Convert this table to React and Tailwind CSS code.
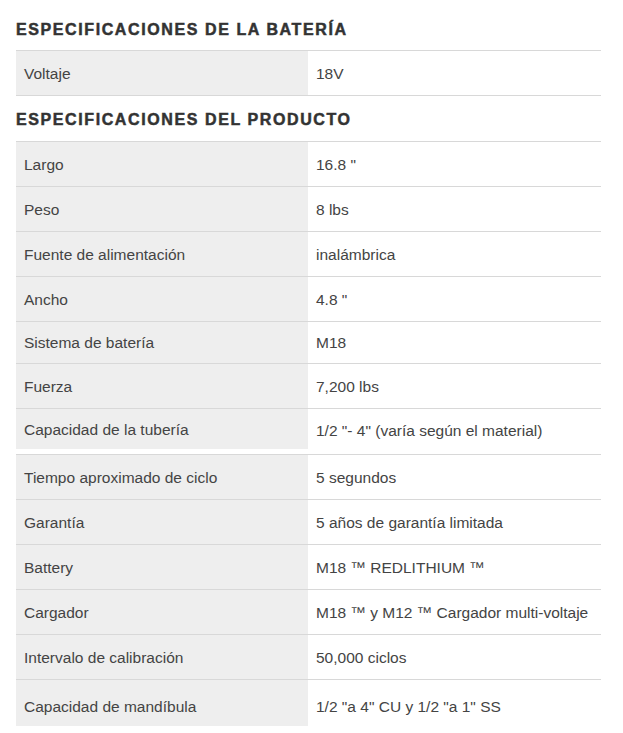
import React from 'react';

const battery = [{ label: 'Voltaje', value: '18V', h: 'h-[44px]' }];

const product = [
  { label: 'Largo', value: '16.8 "', h: 'h-[44px]' },
  { label: 'Peso', value: '8 lbs', h: 'h-[44px]' },
  { label: 'Fuente de alimentación', value: 'inalámbrica', h: 'h-[44px]' },
  { label: 'Ancho', value: '4.8 "', h: 'h-[44px]' },
  { label: 'Sistema de batería', value: 'M18', h: 'h-[41px]' },
  { label: 'Fuerza', value: '7,200 lbs', h: 'h-[44px]' },
  { label: 'Capacidad de la tubería', value: '1/2 "- 4" (varía según el material)', h: 'h-[40px]', gap: true },
  { label: 'Tiempo aproximado de ciclo', value: '5 segundos', h: 'h-[44px]' },
  { label: 'Garantía', value: '5 años de garantía limitada', h: 'h-[44px]' },
  { label: 'Battery', value: 'M18 ™ REDLITHIUM ™', h: 'h-[44px]' },
  { label: 'Cargador', value: 'M18 ™ y M12 ™ Cargador multi-voltaje', h: 'h-[44px]' },
  { label: 'Intervalo de calibración', value: '50,000 ciclos', h: 'h-[44px]' },
  { label: 'Capacidad de mandíbula', value: '1/2 "a 4" CU y 1/2 "a 1" SS', h: 'h-[46px]', low: true },
];

const Row = ({ row }) => (
  <div className={`grid grid-cols-[292px_1fr] border-t border-[#d8d8d8] ${row.gap ? 'pb-[5px]' : ''}`}>
    <div className={`${row.h} bg-[#eeeeee] px-2 flex items-center ${row.low ? 'pt-[7px]' : ''}`}>
      {row.label}
    </div>
    <div className={`px-2 flex items-center ${row.low ? 'pt-[7px]' : ''} ${row.gap ? 'pt-[3px]' : ''}`}>
      {row.value}
    </div>
  </div>
);

const App = () => {
  return (
    <div className="bg-white min-h-[733px] pl-4 text-[15.5px] leading-[17px] text-[#444444] font-['Liberation_Sans',Arial,sans-serif]">
      <div className="w-[585px]">
        <h2 className="pt-[21px] pb-[12px] font-bold text-[16px] leading-[17px] tracking-[1.6px] text-[#333333] [-webkit-text-stroke:0.5px_#333333]">
          ESPECIFICACIONES DE LA BATERÍA
        </h2>
        <div className="border-b border-[#d8d8d8]">
          {battery.map((r) => (
            <Row key={r.label} row={r} />
          ))}
        </div>
        <h2 className="pt-[15px] pb-[13px] font-bold text-[16px] leading-[17px] tracking-[1.6px] text-[#333333] [-webkit-text-stroke:0.5px_#333333]">
          ESPECIFICACIONES DEL PRODUCTO
        </h2>
        <div>
          {product.map((r) => (
            <Row key={r.label} row={r} />
          ))}
        </div>
      </div>
    </div>
  );
};

export default App;
